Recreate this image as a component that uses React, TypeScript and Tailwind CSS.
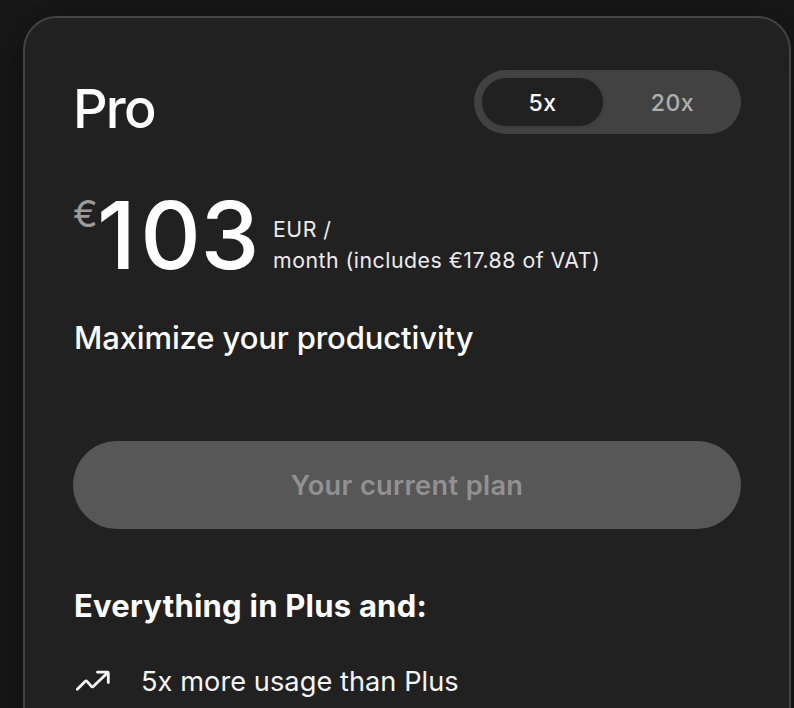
import React from "react";

function TrendIcon() {
  return (
    <svg width="36" height="26" viewBox="0 0 36 26" fill="none" stroke="#f5f5f5" strokeWidth="2.8" strokeLinecap="round" strokeLinejoin="round">
      <path d="M2.3 21.3L10.3 13.3Q11.2 12.4 12 13.4L16.4 18.4Q17.3 19.4 18.2 18.5L32.6 4.8" />
      <path d="M22.5 4.2H32.3Q33.3 4.2 33.3 5.2V14.6" />
    </svg>
  );
}

export default function App() {
  return (
    <div className="h-[708px] w-[794px] overflow-hidden bg-[#181818] pt-[16px] pl-[23px] font-['Inter',sans-serif] text-white">
      <section className="h-[760px] w-[768px] rounded-[34px] border-2 border-[#444444] bg-[#212121] px-[48px] pt-[52px] shadow-[0_8px_40px_rgba(0,0,0,0.45)]">
        <header className="flex h-[76px] justify-between">
          <h1 className="h-[76px] text-[54px] leading-[78px] font-medium tracking-[-1.8px]">Pro</h1>
          <div className="flex h-[64px] w-[267px] rounded-full bg-[#424242] p-[8px] text-[23px] font-medium tracking-[0.5px]">
            <button className="h-[48px] w-[121px] rounded-full bg-[#212121] leading-[51px] shadow-[0_1px_4px_rgba(0,0,0,0.12)]">5x</button>
            <button className="h-[48px] flex-1 pl-[9px] leading-[51px] text-[#afafaf]">20x</button>
          </div>
        </header>
        <div className="mt-[39px] flex h-[100px]">
          <span className="mt-[7px] h-[44px] w-[24px] text-[37px] leading-[44px] text-[#9b9b9b]">€</span>
          <span className="h-[100px] w-[176px] whitespace-nowrap text-[94px] leading-[100px] font-medium"><span className="tracking-[4.3px]">1</span><span className="tracking-[-0.5px]">03</span></span>
          <div className="mt-[29px] text-[21.3px] leading-[31px] tracking-[0.5px] whitespace-nowrap text-[#ececec]">
            <p>EUR /</p>
            <p>month (includes €17.88 of VAT)</p>
          </div>
        </div>
        <p className="mt-[29px] h-[48px] whitespace-nowrap pl-[1px] text-[31px] leading-[48px] font-medium tracking-[-0.12px]">Maximize your productivity</p>
        <button className="mt-[79px] flex h-[88px] w-[668px] items-center justify-center rounded-full bg-[#575757] pt-[2px] text-[27.2px] font-semibold tracking-[0.35px] text-[#919191]">
          Your current plan
        </button>
        <h2 className="mt-[53px] h-[48px] whitespace-nowrap pl-[1px] text-[31px] leading-[48px] font-bold tracking-[0.23px]">Everything in Plus and:</h2>
        <div className="mt-[31px] flex h-[40px] items-center whitespace-nowrap text-[27.2px] leading-[40px] tracking-[0.05px] text-[#f5f5f5]">
          <span className="ml-[2px] w-[66px]"><TrendIcon /></span>
          <span className="pt-[2px]">5x more usage than Plus</span>
        </div>
      </section>
    </div>
  );
}
